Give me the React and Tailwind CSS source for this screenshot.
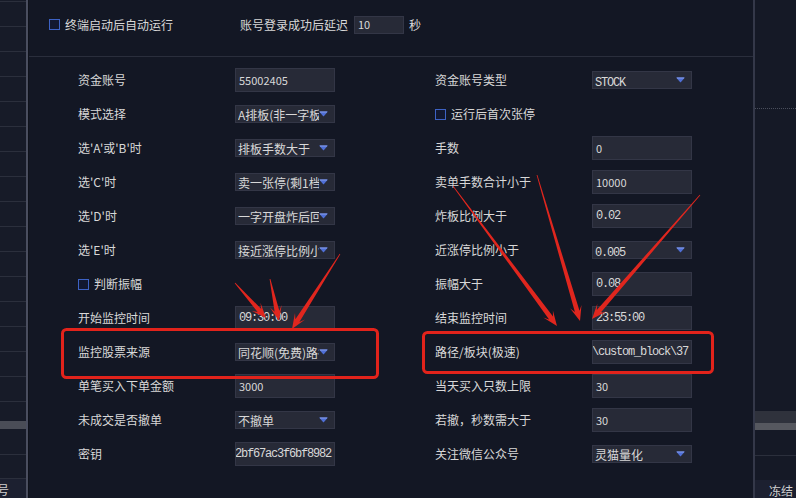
import React from "react";

const CJK = "font-['Noto_Sans_CJK_SC','Noto_Sans',sans-serif]";
const MONO = "font-['Liberation_Mono','DejaVu_Sans_Mono',monospace]";

function Label({ children }) {
  return (
    <div className={`${CJK} text-[12px] leading-none text-[#d8d8d8] whitespace-nowrap`}>{children}</div>
  );
}

function Check({ children }) {
  return (
    <div className={`${CJK} flex items-center gap-[5px] text-[12px] leading-none text-[#d8d8d8] whitespace-nowrap`}>
      <span className="w-[11px] h-[11px] border border-[#3d62c4] bg-[#121830]"></span>
      <span>{children}</span>
    </div>
  );
}

function TextInput({ value, mono, clip }) {
  return (
    <div
      className={`w-[100px] h-[24px] bg-[#272a37] border border-[#333646] flex items-center px-[3px] overflow-hidden whitespace-nowrap ${
        clip ? "justify-end" : ""
      }`}
    >
      <span
        className={`${mono ? `${MONO} text-[12px] tracking-[-1.2px]` : `${CJK} text-[11px]`} leading-none text-[#d8d8d8] shrink-0`}
      >
        {value}
      </span>
    </div>
  );
}

function Arrow() {
  return (
    <svg width="9" height="6" viewBox="0 0 9 6" className="shrink-0">
      <polygon points="0,0.5 9,0.5 4.5,5.5" fill="#4f6fd6" />
      <rect x="1" y="0.5" width="7" height="1" fill="#8aa0ea" />
    </svg>
  );
}

function Select({ value, mono }) {
  return (
    <div className="w-[100px] h-[18px] bg-[#272a37] border border-[#333646] flex items-center pl-[2px] pr-[6px]">
      <div className="w-[82px] overflow-hidden whitespace-nowrap">
        <span
          className={`${mono ? `${MONO} text-[12px] tracking-[-1.2px]` : `${CJK} text-[12px]`} leading-none text-[#d8d8d8]`}
        >
          {value}
        </span>
      </div>
      <div className="flex-1"></div>
      <Arrow />
    </div>
  );
}

const rows = [
  [<Label>资金账号</Label>, <TextInput value="55002405" />, <Label>资金账号类型</Label>, <Select value="STOCK" mono />],
  [<Label>模式选择</Label>, <Select value="A排板(非一字板)" />, <Check>运行后首次张停</Check>, null],
  [<Label>选'A'或'B'时</Label>, <Select value="排板手数大于" />, <Label>手数</Label>, <TextInput value="0" />],
  [<Label>选'C'时</Label>, <Select value="卖一张停(剩1档)" />, <Label>卖单手数合计小于</Label>, <TextInput value="10000" />],
  [<Label>选'D'时</Label>, <Select value="一字开盘炸后回封" />, <Label>炸板比例大于</Label>, <TextInput value="0.02" mono />],
  [<Label>选'E'时</Label>, <Select value="接近涨停比例小于" />, <Label>近涨停比例小于</Label>, <Select value="0.005" mono />],
  [<Check>判断振幅</Check>, null, <Label>振幅大于</Label>, <TextInput value="0.08" mono />],
  [<Label>开始监控时间</Label>, <TextInput value="09:30:00" mono />, <Label>结束监控时间</Label>, <TextInput value="23:55:00" mono />],
  [<Label>监控股票来源</Label>, <Select value="同花顺(免费)路径" />, <Label>路径/板块(极速)</Label>, <TextInput value="ths\custom_block\37" mono clip />],
  [<Label>单笔买入下单金额</Label>, <TextInput value="3000" />, <Label>当天买入只数上限</Label>, <TextInput value="30" />],
  [<Label>未成交是否撤单</Label>, <Select value="不撤单" />, <Label>若撤，秒数需大于</Label>, <TextInput value="30" />],
  [<Label>密钥</Label>, <TextInput value="c2bf67ac3f6bf8982" mono clip />, <Label>关注微信公众号</Label>, <Select value="灵猫量化" />],
];

function arrowPoints(x1, y1, x2, y2) {
  const dx = x2 - x1,
    dy = y2 - y1,
    L = Math.hypot(dx, dy);
  const ux = dx / L,
    uy = dy / L,
    nx = -uy,
    ny = ux;
  const head = 15,
    hw = 6,
    w0 = 0.4,
    w1 = 2.4,
    neck = 10;
  const bx = x2 - ux * neck,
    by = y2 - uy * neck;
  const hx = x2 - ux * head,
    hy = y2 - uy * head;
  return [
    [x1 + nx * w0, y1 + ny * w0],
    [bx + nx * w1, by + ny * w1],
    [hx + nx * hw, hy + ny * hw],
    [x2, y2],
    [hx - nx * hw, hy - ny * hw],
    [bx - nx * w1, by - ny * w1],
    [x1 - nx * w0, y1 - ny * w0],
  ]
    .map((p) => p.map((v) => v.toFixed(1)).join(","))
    .join(" ");
}

const arrows = [
  [235, 283, 266, 318],
  [270, 279, 279, 321],
  [340, 254, 292, 329],
  [453, 186, 557, 326],
  [537, 175, 580, 321],
  [700, 195, 592, 319],
];

export default function App() {
  return (
    <div className="relative w-[796px] h-[498px] overflow-hidden bg-[#131724] flex">
      {/* left background window */}
      <div className="w-[26px] h-full bg-[#171b28] flex flex-col">
        <div className="h-[2px] border-b border-[#2b2f3c]"></div>
        {Array.from({ length: 16 }).map((_, i) => (
          <div key={i} className="h-[25px] border-b border-[#2b2f3c] shrink-0"></div>
        ))}
        <div className="h-[19px] shrink-0"></div>
        <div className="h-[8px] bg-[#4a4d57] shrink-0"></div>
        <div className="h-[26px] border-b border-[#2b2f3c] shrink-0"></div>
        <div className="h-[24px] border-b border-[#2b2f3c] shrink-0"></div>
        <div className={`${CJK} flex-1 bg-[#1c2030] text-[12px] leading-none text-[#cfcfcf] pt-[5px] -ml-[3px]`}>号</div>
      </div>
      <div className="w-[2px] h-full bg-[#4a4e5f]"></div>
      <div className="w-[1px] h-full bg-[#0f121b]"></div>

      {/* dialog */}
      <div className="w-[724px] h-full flex flex-col">
        <div className="h-[57px] shrink-0 border-b border-[#2a2e3c] flex items-center pl-[20px] pb-[7px]">
          <div className="w-[191px]">
            <Check>终端启动后自动运行</Check>
          </div>
          <Label>账号登录成功后延迟</Label>
          <div className="ml-[6px] w-[50px] h-[18px] bg-[#272a37] border border-[#333646] flex items-center px-[3px]">
            <span className={`${CJK} text-[11px] leading-none text-[#d8d8d8]`}>10</span>
          </div>
          <div className="ml-[5px]">
            <Label>秒</Label>
          </div>
        </div>
        <div className="pl-[49px] pt-[6px] grid grid-cols-[157px_100px_100px_157px_100px] auto-rows-[34px] items-center">
          {rows.map((r, i) => (
            <React.Fragment key={i}>
              <div>{r[0]}</div>
              <div>{r[1]}</div>
              <div></div>
              <div>{r[2]}</div>
              <div>{r[3]}</div>
            </React.Fragment>
          ))}
        </div>
      </div>

      {/* right background window */}
      <div className="w-[2px] h-full bg-[#343849]"></div>
      <div className="flex-1 h-full bg-[#151926] flex flex-col">
        <div className="h-[107px] shrink-0"></div>
        <div className="h-[2px] border-b border-dotted border-[#4a4e5c] shrink-0"></div>
        <div className="h-[302px] shrink-0"></div>
        <div className="h-[12px] bg-[#2f323c] shrink-0"></div>
        <div className="h-[7px] bg-[#56585f] shrink-0"></div>
        <div className="h-[26px] border-b border-[#2b2f3c] shrink-0"></div>
        <div className="h-[24px] shrink-0"></div>
        <div className={`${CJK} flex-1 bg-[#1c2030] text-[12px] leading-none text-[#cfcfcf] pt-[5px] pl-[14px] whitespace-nowrap overflow-hidden`}>冻结</div>
      </div>

      {/* annotations */}
      <svg className="absolute inset-0 pointer-events-none" width="796" height="498" viewBox="0 0 796 498">
        <rect x="62.5" y="329.5" width="315" height="48" rx="4" fill="none" stroke="#e2231b" strokeWidth="3" />
        <rect x="423.5" y="332.5" width="289" height="40" rx="4" fill="none" stroke="#e2231b" strokeWidth="3" />
        {arrows.map((a, i) => (
          <polygon key={i} points={arrowPoints(...a)} fill="#e0261e" />
        ))}
      </svg>
    </div>
  );
}
